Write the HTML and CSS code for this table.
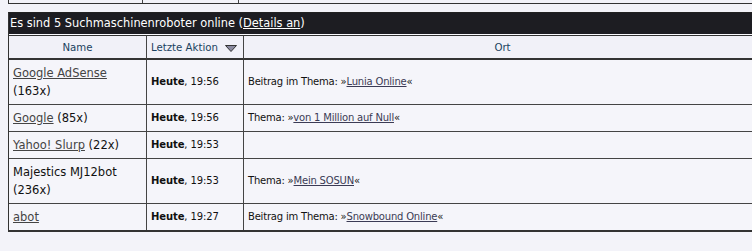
FILE: index.html
```html
<!DOCTYPE html>
<html lang="de">
<head>
<meta charset="utf-8">
<title>Suchmaschinenroboter online</title>
<link rel="stylesheet" href="styles.css">
</head>
<body>
<div class="prev">
  <div class="prev-cell c1"></div>
  <div class="prev-cell c2"></div>
  <div class="prev-cell c3"></div>
</div>
<table class="bots">
  <colgroup>
    <col class="col-name">
    <col class="col-time">
    <col class="col-loc">
  </colgroup>
  <thead>
    <tr>
      <th class="title" colspan="3">Es sind 5 Suchmaschinenroboter online (<a href="#" class="title-link">Details an</a>)</th>
    </tr>
    <tr class="heads">
      <th class="h h-name">Name</th>
      <th class="h h-time">Letzte Aktion <svg class="sort" width="12" height="7" viewBox="0 0 12 7"><polygon points="0.5,0.5 11.5,0.5 6,6.5" fill="#8a8aa0" stroke="#333" stroke-width="1"/></svg></th>
      <th class="h h-loc">Ort</th>
    </tr>
  </thead>
  <tbody>
    <tr>
      <td class="name"><a href="#">Google AdSense</a><br>(163x)</td>
      <td class="time"><b>Heute</b>, 19:56</td>
      <td class="loc">Beitrag im Thema: »<a href="#">Lunia Online</a>«</td>
    </tr>
    <tr>
      <td class="name"><a href="#">Google</a> (85x)</td>
      <td class="time"><b>Heute</b>, 19:56</td>
      <td class="loc">Thema: »<a href="#">von 1 Million auf Null</a>«</td>
    </tr>
    <tr>
      <td class="name"><a href="#">Yahoo! Slurp</a> (22x)</td>
      <td class="time"><b>Heute</b>, 19:53</td>
      <td class="loc"></td>
    </tr>
    <tr>
      <td class="name">Majestics MJ12bot<br>(236x)</td>
      <td class="time"><b>Heute</b>, 19:53</td>
      <td class="loc">Thema: »<a href="#">Mein SOSUN</a>«</td>
    </tr>
    <tr class="last">
      <td class="name"><a href="#">abot</a></td>
      <td class="time"><b>Heute</b>, 19:27</td>
      <td class="loc">Beitrag im Thema: »<a href="#">Snowbound Online</a>«</td>
    </tr>
  </tbody>
</table>
</body>
</html>
```
FILE: styles.css
```css
html, body {
  margin: 0;
  padding: 0;
  overflow: hidden;
  background: #f3f3f9;
}
body {
  font-family: "DejaVu Sans", Verdana, sans-serif;
  color: #111;
}
.prev {
  display: grid;
  grid-template-columns: 134px 96px 1fr;
  width: 752px;
  height: 3px;
  margin-left: 8px;
  border-left: 1px solid #333;
  border-bottom: 1px solid #333;
}
.prev-cell {
  border-right: 1px solid #444;
}
.prev-cell.c3 {
  border-right: none;
}
.bots {
  margin-top: 8px;
  margin-left: 8px;
  width: 753px;
  table-layout: fixed;
  border-collapse: separate;
  border-spacing: 0;
  border-left: 1px solid #333;
  border-top: 1px solid #222;
  border-bottom: 2px solid #333;
  background: #f5f5fa;
}
.col-name { width: 138px; }
.col-time { width: 97px; }
.bots th, .bots td {
  box-sizing: border-box;
  padding: 0;
}
.bots .title {
  height: 22px;
  background: #1d1d22;
  color: #fff;
  font-size: 11.4px;
  font-weight: normal;
  text-align: left;
  padding: 0 0 0 1px;
  border-bottom: 1px solid #fbfbff;
  line-height: 21px;
  white-space: nowrap;
}
.title-link {
  color: #fff;
}
.bots .h {
  height: 25px;
  font-size: 10.2px;
  font-weight: normal;
  color: #1a4260;
  background: #f1f1f8;
  border-top: 1px solid #333;
  border-bottom: 2px solid #333;
  vertical-align: middle;
  padding-top: 1px;
}
.bots .h-name, .bots .h-loc { text-align: center; }
.bots .h-time { text-align: left; padding-left: 4px; }
.bots .h-name, .bots .h-time, .bots td.name, .bots td.time {
  border-right: 1px solid #444;
}
.sort {
  vertical-align: -1px;
  margin-left: 4px;
}
.bots td {
  border-bottom: 1px solid #444;
  vertical-align: middle;
  padding: 4px;
  line-height: 18px;
}
.bots tr.last td {
  border-bottom: none;
}
.bots td.name {
  font-size: 11.5px;
  color: #111;
}
.name a {
  color: #444;
}
.bots td.time {
  font-size: 10px;
  letter-spacing: -0.1px;
  color: #111;
}
.bots td.loc {
  font-size: 10px;
  letter-spacing: -0.2px;
  color: #111;
}
.loc a {
  color: #3b3b55;
}
```
